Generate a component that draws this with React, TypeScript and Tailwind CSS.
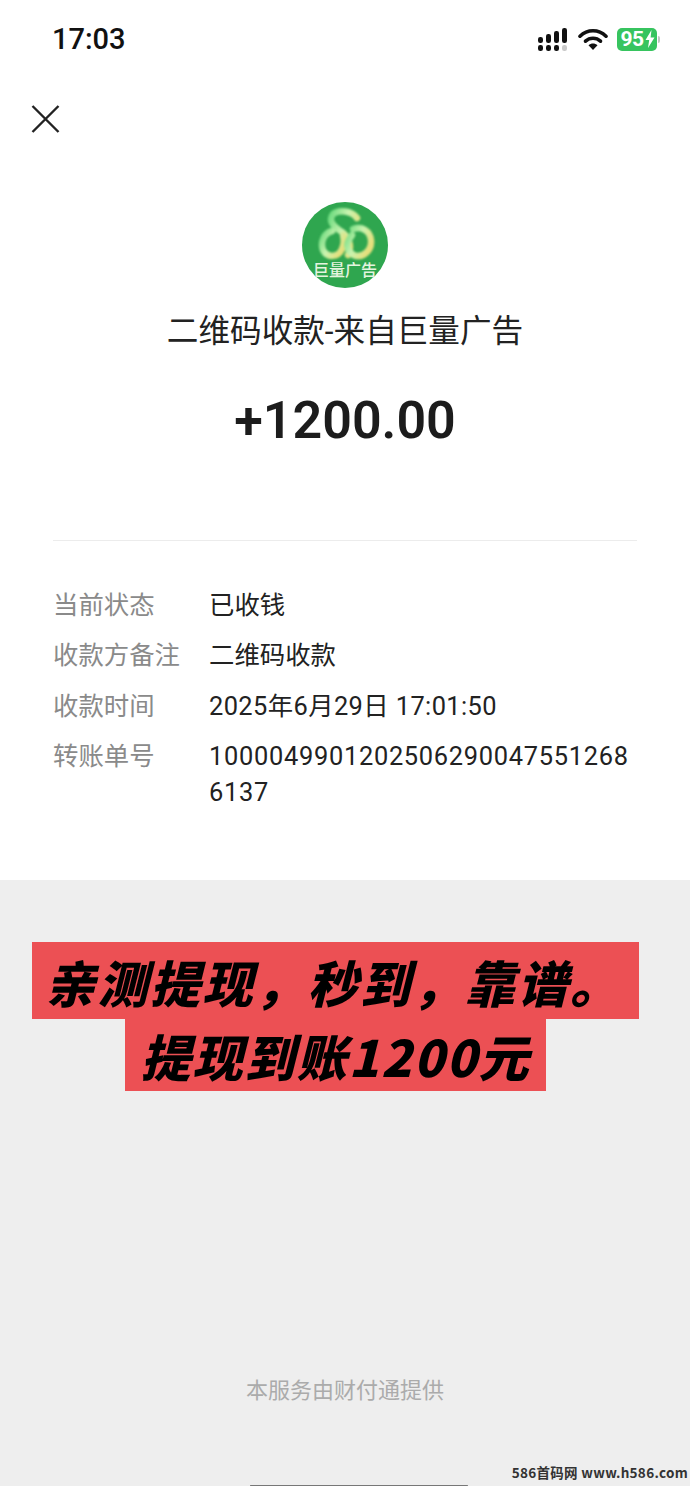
const sans = "font-['Roboto','Noto_Sans_CJK_SC',sans-serif]";

function SignalIcon() {
  return (
    <svg width="32" height="23" viewBox="0 0 32 23" className="block">
      <rect x="1" y="9" width="5" height="6" rx="2.2" fill="#111" />
      <rect x="9" y="6" width="5" height="9" rx="2.2" fill="#111" />
      <rect x="17" y="3" width="5" height="12" rx="2.2" fill="#111" />
      <rect x="25" y="0" width="5" height="15" rx="2.2" fill="#111" />
      <rect x="1" y="17" width="5" height="6" rx="2.2" fill="#111" />
      <rect x="9" y="17" width="5" height="6" rx="2.2" fill="#111" />
      <rect x="17" y="17" width="5" height="6" rx="2.2" fill="#111" />
      <rect x="25" y="17" width="5" height="6" rx="2.2" fill="#c9c9c9" />
    </svg>
  );
}

function WifiIcon() {
  return (
    <svg width="30" height="22" viewBox="0 0 30 22" className="block">
      <path d="M2 8.2C9.5 1 20.5 1 28 8.2" fill="none" stroke="#111" strokeWidth="3.6" strokeLinecap="round" />
      <path d="M7.5 13.2C11.8 9.3 18.2 9.3 22.5 13.2" fill="none" stroke="#111" strokeWidth="3.6" strokeLinecap="round" />
      <path d="M15 22L10.5 17.2C13 15 17 15 19.5 17.2Z" fill="#111" />
    </svg>
  );
}

function BatteryIcon() {
  return (
    <div className="flex items-center">
      <div className="flex h-[23px] w-[40px] items-center justify-center rounded-[5px] bg-[#37c45f] pl-[1px] text-[21px] leading-none font-bold text-white">
        <span className="font-['Roboto',sans-serif] tracking-[-0.5px]">95</span>
        <svg width="10" height="18" viewBox="0 0 10 18" className="ml-[1px] block">
          <path d="M6.5 0L0.5 10H4.2L3 18L9.5 7.5H5.6Z" fill="#fff" />
        </svg>
      </div>
      <div className="ml-[1px] h-[7px] w-[2px] rounded-r-sm bg-[#c4c4c4]" />
    </div>
  );
}

function Logo() {
  return (
    <div className="relative h-[86px] w-[86px] overflow-hidden rounded-full bg-[#2fa64f]">
      <svg width="86" height="86" viewBox="0 0 86 86" className="block blur-[0.8px]">
        <defs>
          <linearGradient id="knot" x1="0" y1="0" x2="1" y2="0.6">
            <stop offset="0" stopColor="#6fdc80" />
            <stop offset="0.5" stopColor="#c9f3b0" />
            <stop offset="1" stopColor="#e6df7c" />
          </linearGradient>
        </defs>
        <g fill="none" stroke="url(#knot)" strokeWidth="6.5" strokeLinecap="round" strokeLinejoin="round">
          <path d="M55 16C50 9 37 7 31 12C26 18 31 24 37 28C46 33 51 43 46 53" />
          <path d="M30 29C22 31 18 40 21 48C25 56 36 56 40 47C43 41 42 37 41 33" />
          <path d="M51 27C60 24 68 29 69 38C70 48 62 55 54 54C47 52 44 45 46 40C47 37 49 35 50 33" />
        </g>
      </svg>
      <div className="absolute top-[57px] left-0 flex w-full justify-center font-['Noto_Sans_CJK_SC',sans-serif] text-[16px] leading-[20px] font-medium text-[#e4f4df]">
        巨量广告
      </div>
    </div>
  );
}

function InfoRow({ label, value, valueClass = "" }: { label: string; value: string; valueClass?: string }) {
  return (
    <div className="grid grid-cols-[156px_422px]">
      <div className="text-[#8a8a8a]">{label}</div>
      <div className={`break-all text-[#222] ${valueClass}`}>{value}</div>
    </div>
  );
}

export default function App() {
  return (
    <div className={`relative flex min-h-[1486px] w-[690px] flex-col overflow-hidden bg-[#eeeeee] ${sans}`}>
      <div className="h-[880px] bg-white">
        <div className="flex h-[78px] items-center justify-between pr-[30px] pl-[52px]">
          <div className="pt-[1px] text-[29px] leading-none font-medium text-[#111]">17:03</div>
          <div className="flex items-center gap-[9px]">
            <SignalIcon />
            <WifiIcon />
            <BatteryIcon />
          </div>
        </div>

        <div className="pt-[27px] pl-[31px]">
          <svg width="29" height="28" viewBox="0 0 29 28" className="block">
            <path d="M1.5 1L27.5 27M27.5 1L1.5 27" stroke="#222" strokeWidth="2.4" fill="none" />
          </svg>
        </div>

        <div className="flex flex-col items-center pt-[69px]">
          <Logo />
          <div className="mt-[23px] text-[31.6px] leading-[42px] text-[#222]">二维码收款-来自巨量广告</div>
          <div className="mt-[37px] text-[52px] leading-[62px] font-semibold text-[#1c1c1c]">+1200.00</div>
        </div>

        <div className="mx-[53px] mt-[88px] h-[1px] w-[584px] bg-[#ececec]" />

        <div className="flex flex-col gap-[14.4px] pt-[46px] pl-[53px] text-[25.4px] leading-[36px]">
          <InfoRow label="当前状态" value="已收钱" />
          <InfoRow label="收款方备注" value="二维码收款" />
          <InfoRow label="收款时间" value="2025年6月29日 17:01:50" valueClass="tracking-[0.4px]" />
          <InfoRow label="转账单号" value="10000499012025062900475512686137" valueClass="tracking-[0.72px]" />
        </div>
      </div>

      <div className="flex flex-col items-start font-['Noto_Sans_CJK_SC',sans-serif] font-black text-black italic">
        <div className="mt-[62px] ml-[32px] flex h-[77px] w-[607px] items-center bg-[#ec5054] pl-[13px] text-[50px] leading-none tracking-[2.5px] whitespace-nowrap">
          亲测提现，秒到，靠谱。
        </div>
        <div className="ml-[125px] flex h-[72px] w-[421px] items-center justify-center bg-[#ec5054] text-[50px] leading-none tracking-[2px] whitespace-nowrap">
          提现到账1200元
        </div>
      </div>

      <div className="mt-[282px] text-center font-['Noto_Sans_CJK_SC',sans-serif] text-[22px] leading-[30px] text-[#ababab]">
        本服务由财付通提供
      </div>

      <div className="absolute right-[2px] bottom-[5px] font-['Noto_Sans_CJK_SC',sans-serif] text-[13.5px] leading-[18px] font-bold tracking-[0.3px] text-[#333]">
        586首码网 www.h586.com
      </div>
      <div className="absolute bottom-0 left-[250px] h-[1px] w-[218px] rounded-full bg-[#777]" />
    </div>
  );
}
